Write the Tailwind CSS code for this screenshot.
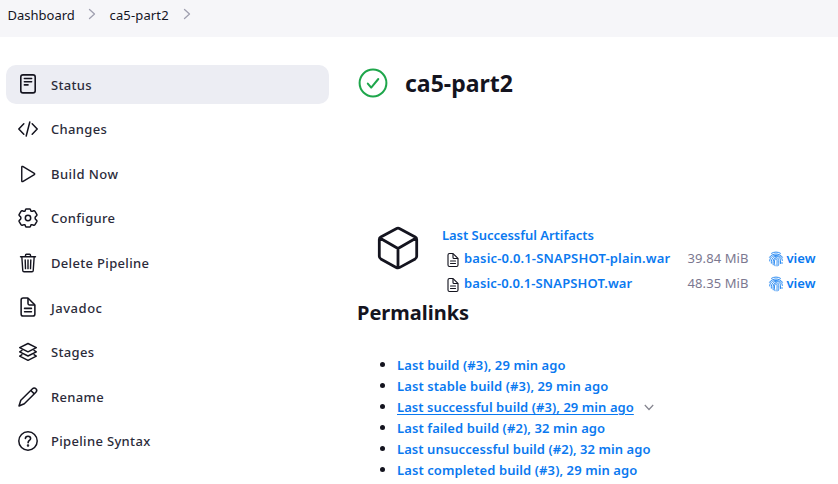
<!DOCTYPE html>
<html lang="en">
<head>
<meta charset="utf-8">
<title>ca5-part2</title>
<script src="https://cdn.jsdelivr.net/npm/@tailwindcss/browser@4"></script>
</head>
<body class="w-[838px] h-[484px] overflow-hidden bg-white text-[#14141f] font-['Noto_Sans','Open_Sans',sans-serif]">
<svg class="hidden">
  <symbol id="doc" viewBox="0 0 512 512"><g fill="none" stroke="currentColor" stroke-linejoin="round" stroke-linecap="round" stroke-width="36"><path d="M416 221.25V416a48 48 0 01-48 48H144a48 48 0 01-48-48V96a48 48 0 0148-48h98.75a32 32 0 0122.62 9.37l141.26 141.26a32 32 0 019.37 22.62z"/><path d="M256 56v120a32 32 0 0032 32h120M176 288h160M176 368h160"/></g></symbol>
  <symbol id="finger" viewBox="0 0 16 16"><g fill="none" stroke="currentColor" stroke-width=".85" stroke-linecap="round"><path d="M3.500 2.300C6 .6 10 .6 12.500 2.300M1.500 6.300C4 1.800 12 1.800 14.500 6.300M1.700 10C1.400 2.500 14.300 2.500 14.400 9.500M3.300 12.200C2.500 3.500 12.500 3.500 12.500 9.500V12.500M5.200 13.800C3.800 5 10.800 5.200 10.800 9.500 10.800 12 10.900 13 10.500 14.300M7 14.800C5.800 11 6.500 7.800 8 7.800 9.800 7.800 8.800 11.500 9 15M14 11.500V12.500"/></g></symbol>
  <symbol id="right" viewBox="0 0 8 12"><path d="M1.500 1.500L6.500 6L1.500 10.500" fill="none" stroke="currentColor" stroke-width="1.300" stroke-linecap="round" stroke-linejoin="round"/></symbol>
</svg>
<header class="h-[37px] bg-[#f6f6f9] flex items-start pl-[7.500px] pt-[5px] text-[13px] leading-[20px]">
  <span class="w-[80.500px]">Dashboard</span>
  <svg class="w-[8px] h-[12px] mt-[3px] text-[#a0a0b0]"><use href="#right"/></svg>
  <span class="ml-[13.500px] w-[73.500px] tracking-[0.150px]">ca5-part2</span>
  <svg class="w-[8px] h-[12px] mt-[3px] text-[#a0a0b0]"><use href="#right"/></svg>
</header>
<div class="flex">
  <nav class="w-[323px] ml-[6px] mt-[28.200px] flex flex-col gap-[6px] shrink-0 text-[13px] font-medium tracking-[0.330px] text-[#2b2b3a]">
    <a class="h-[38.600px] flex items-center gap-[13px] pl-[12px] rounded-[10px] bg-[#ecedf3]">
      <svg class="size-[20px] text-[#14141f]" viewBox="0 0 20 20" fill="none" stroke="currentColor" stroke-width="1.600" stroke-linecap="round"><rect x="2.800" y=".9" width="14.400" height="18" rx="2.200"/><path d="M6.400 4.500h7.200M6.400 7.700h7.200M6.400 10.900h3.600"/></svg><span class="pt-[2px]">Status</span></a>
    <a class="h-[38.600px] flex items-center gap-[13px] pl-[12px]">
      <svg class="size-[20px] text-[#14141f]" viewBox="0 0 20 20" fill="none" stroke="currentColor" stroke-width="1.500" stroke-linecap="round" stroke-linejoin="round"><path d="M5.800 4.800L.8 10l5 5.200M14.200 4.800l5 5.200-5 5.200M11.800 3L8.200 17"/></svg><span class="pt-[1px]">Changes</span></a>
    <a class="h-[38.600px] flex items-center gap-[13px] pl-[12px]">
      <svg class="size-[20px] text-[#14141f]" viewBox="0 0 512 512" fill="none" stroke="currentColor" stroke-width="36" stroke-linejoin="round"><path d="M96 78v356c0 14 13 22 24 16l298-178c12-7 12-25 0-32L120 62c-11-6-24 2-24 16z"/></svg><span class="pt-[2px] tracking-[0.450px]">Build Now</span></a>
    <a class="h-[38.600px] flex items-center gap-[13px] pl-[12px]">
      <svg class="size-[20px] text-[#14141f]" viewBox="0 0 20 20" fill="none" stroke="currentColor" stroke-width="1.500" stroke-linejoin="round"><circle cx="10" cy="10" r="2.700"/><path d="M8.200 .9H11.800Q12.500 1 12.700 2.300Q13 3.700 14.400 3.200L15.700 2.800Q16.500 2.600 17 3.400L18.800 6.400Q19.200 7.200 18.400 7.900C16.600 9.300 16.600 10.700 18.400 12.100Q19.200 12.800 18.800 13.600L17 16.600Q16.500 17.400 15.700 17.200L14.400 16.800Q13 16.300 12.700 17.700Q12.500 19 11.800 19.100H8.200Q7.500 19 7.300 17.700Q7 16.300 5.600 16.800L4.300 17.200Q3.500 17.400 3 16.600L1.200 13.600Q.8 12.800 1.600 12.100C3.400 10.700 3.400 9.300 1.600 7.900Q.8 7.200 1.200 6.400L3 3.400Q3.500 2.600 4.300 2.800L5.600 3.200Q7 3.700 7.300 2.300Q7.500 1 8.200 .9z"/></svg><span class="pt-[1px]">Configure</span></a>
    <a class="h-[38.600px] flex items-center gap-[13px] pl-[12px]">
      <svg class="size-[20px] mt-[1px] text-[#14141f]" viewBox="0 0 512 512" fill="none" stroke="currentColor" stroke-width="36" stroke-linecap="round" stroke-linejoin="round"><path d="M98 96l24 352c1 18.490 14.400 32 32 32h204c17.670 0 31-13.510 32-32l24-352M64 96h384M192 94V58c0-14 8-26 24-26h80c16 0 24 12 24 26v36M256 176v224M184 176l8 224M328 176l-8 224"/></svg><span class="pt-[1px]">Delete Pipeline</span></a>
    <a class="h-[38.600px] flex items-center gap-[13px] pl-[12px]">
      <svg class="size-[22px] -m-[1px] text-[#14141f]"><use href="#doc"/></svg><span class="pt-[2px] tracking-[0.520px]">Javadoc</span></a>
    <a class="h-[38.600px] flex items-center gap-[13px] pl-[12px]">
      <svg class="size-[20px] text-[#14141f]" viewBox="0 0 20 20" fill="none" stroke="currentColor" stroke-width="1.500" stroke-linejoin="round"><path d="M10 1.500L18.300 5.700 10 9.800 1.700 5.700zM4.400 8.200L1.700 9.900 10 14l8.300-4.100-2.700-1.700M4.400 12.400l-2.700 1.700L10 18.300l8.300-4.200-2.700-1.700"/></svg><span class="pt-[1px]">Stages</span></a>
    <a class="h-[38.600px] flex items-center gap-[13px] pl-[12px]">
      <svg class="size-[20px] text-[#14141f]" viewBox="0 0 20 20" fill="none" stroke="currentColor" stroke-width="1.500" stroke-linejoin="round"><path d="M1 19l1.800-5.700L14.500 1.800c1-1 2.500-.9 3.400 0s1 2.400 0 3.400L6.300 16.800zM12.900 3.500l3.400 3.400"/></svg><span class="pt-[2px]">Rename</span></a>
    <a class="h-[38.600px] flex items-center gap-[13px] pl-[12px]">
      <svg class="size-[20px] text-[#14141f]" viewBox="0 0 20 20" fill="none" stroke="currentColor" stroke-width="1.500" stroke-linecap="round"><circle cx="10" cy="10" r="9.200"/><path d="M7.400 7.500C7.500 4.400 12.600 4.500 12.600 7.500c0 2-2.500 2-2.500 4.200" stroke-width="1.600"/><circle cx="10" cy="14.500" r=".5"/></svg><span class="pt-[1px]">Pipeline Syntax</span></a>
  </nav>
  <main class="ml-[28px] flex-1">
    <div class="flex items-center mt-[27px] h-[38px] pl-[1px]">
      <svg class="size-[30px]" viewBox="0 0 30 30" fill="none" stroke="#1ea64b" stroke-width="2" stroke-linecap="round" stroke-linejoin="round"><circle cx="15" cy="15" r="13.400"/><path d="M9.800 15.600l3.400 4L20.300 11"/></svg>
      <h1 class="ml-[17px] text-[23px] leading-[32px] font-bold whitespace-nowrap"><span>ca5-part2</span></h1>
    </div>
    <section class="flex mt-[122px] h-[72px]">
      <svg class="size-[48px] ml-[17px] shrink-0" viewBox="0 0 48 48" fill="none" stroke="currentColor" stroke-width="2.800" stroke-linejoin="round"><path d="M22.200 4.700L6.800 12.900Q5.300 13.800 5.300 15.500v16.800q0 1.700 1.500 2.600l15.400 8.500q1.800 1 3.600 0l15.400-8.500q1.500-.9 1.500-2.600V15.500q0-1.700-1.500-2.600L25.800 4.700q-1.800-1-3.600 0zM5.800 14L24 24.500 42.200 14M24 24.500V44"/></svg>
      <div class="ml-[20px] text-[13px] font-semibold text-[#0a79f0] whitespace-nowrap">
        <div class="h-[21px] leading-[22px] tracking-[-0.040px]">Last Successful Artifacts</div>
        <div class="h-[25px] flex items-center leading-[20px]"><svg class="size-[16px] ml-[3px] mt-[4px] text-[#14141f]"><use href="#doc"/></svg><span class="ml-[3px] w-[223.500px] tracking-[0.170px]">basic-0.0.1-SNAPSHOT-plain.war</span><span class="w-[80px] font-normal text-[#7b7890] tracking-[0.100px]">39.84 MiB</span><svg class="size-[16px] mt-[2px]"><use href="#finger"/></svg><span class="ml-[3px]">view</span></div>
        <div class="h-[25px] flex items-center leading-[20px]"><svg class="size-[16px] ml-[3px] mt-[4px] text-[#14141f]"><use href="#doc"/></svg><span class="ml-[3px] w-[223.500px] tracking-[0.120px]">basic-0.0.1-SNAPSHOT.war</span><span class="w-[80px] font-normal text-[#7b7890] tracking-[0.100px]">48.35 MiB</span><svg class="size-[16px] mt-[2px]"><use href="#finger"/></svg><span class="ml-[3px]">view</span></div>
      </div>
    </section>
    <h2 class="mt-[3px] text-[20px] leading-[28px] font-bold"><span>Permalinks</span></h2>
    <ul class="mt-[28px] text-[13px] leading-[21px] font-semibold text-[#0a79f0] tracking-[0.090px] whitespace-nowrap">
      <li class="flex items-center h-[21px] pl-[23px]"><i class="size-[5px] rounded-full bg-[#14141f] mr-[12px] -mt-[2px]"></i><span>Last build (#3), 29 min ago</span></li>
      <li class="flex items-center h-[21px] pl-[23px]"><i class="size-[5px] rounded-full bg-[#14141f] mr-[12px] -mt-[2px]"></i><span>Last stable build (#3), 29 min ago</span></li>
      <li class="flex items-center h-[21px] pl-[23px]"><i class="size-[5px] rounded-full bg-[#14141f] mr-[12px] -mt-[2px]"></i><span class="underline underline-offset-[2px] decoration-1 tracking-[0.060px]">Last successful build (#3), 29 min ago</span><svg class="w-[10px] h-[7px] ml-[10px]" viewBox="0 0 10 7" fill="none" stroke="#85858f" stroke-width="1.200"><path d="M.8 1L5 5.500 9.200 1"/></svg></li>
      <li class="flex items-center h-[21px] pl-[23px]"><i class="size-[5px] rounded-full bg-[#14141f] mr-[12px] -mt-[2px]"></i><span>Last failed build (#2), 32 min ago</span></li>
      <li class="flex items-center h-[21px] pl-[23px]"><i class="size-[5px] rounded-full bg-[#14141f] mr-[12px] -mt-[2px]"></i><span class="tracking-[0.060px]">Last unsuccessful build (#2), 32 min ago</span></li>
      <li class="flex items-center h-[21px] pl-[23px]"><i class="size-[5px] rounded-full bg-[#14141f] mr-[12px] -mt-[2px]"></i><span>Last completed build (#3), 29 min ago</span></li>
    </ul>
  </main>
</div>
</body>
</html>
